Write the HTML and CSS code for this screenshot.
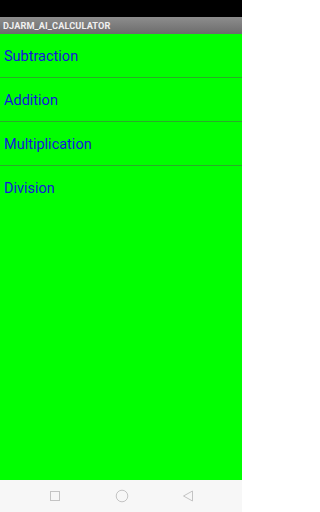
FILE: index.html
```html
<!DOCTYPE html>
<html>
<head>
<meta charset="utf-8">
<link rel="stylesheet" href="styles.css">
</head>
<body>
<div class="screen">
  <div class="status"></div>
  <div class="titlebar">DJARM_AI_CALCULATOR</div>
  <div class="content">
    <div class="row">Subtraction</div>
    <div class="row">Addition</div>
    <div class="row">Multiplication</div>
    <div class="row last">Division</div>
  </div>
  <div class="navbar">
    <svg class="nav-icon" width="12" height="12" viewBox="0 0 12 12"><rect x="1.5" y="1.5" width="9" height="9" fill="none" stroke="#c4c4c4" stroke-width="1"/></svg>
    <svg class="nav-icon" width="14" height="14" viewBox="0 0 14 14"><circle cx="7" cy="7" r="5.8" fill="none" stroke="#c4c4c4" stroke-width="1"/></svg>
    <svg class="nav-icon" width="12" height="12" viewBox="0 0 12 12"><path d="M10.5 1 L1.5 6 L10.5 11 Z" fill="none" stroke="#c4c4c4" stroke-width="1" stroke-linejoin="round"/></svg>
  </div>
</div>
</body>
</html>
```

FILE: styles.css
```css
html, body {
  margin: 0;
  padding: 0;
}
body {
  width: 242px;
  height: 512px;
  overflow: hidden;
  font-family: Roboto, "Liberation Sans", sans-serif;
}
.screen {
  display: flex;
  flex-direction: column;
  height: 512px;
}
.status {
  height: 17px;
  background: #000;
  flex: none;
}
.titlebar {
  height: 17px;
  flex: none;
  background: linear-gradient(#8d8d8d, #6c6c6c);
  color: #f0f0f0;
  font-weight: bold;
  font-size: 9.2px;
  line-height: 17px;
  padding-left: 3px;
  letter-spacing: 0.1px;
}
.content {
  flex: 1;
  background: #00ff00;
}
.row {
  box-sizing: border-box;
  height: 44px;
  padding-top: 2px;
  line-height: 41px;
  padding-left: 4px;
  color: #1414dc;
  font-size: 14.5px;
  border-bottom: 1px solid #2aaa2a;
}
.row.last {
  border-bottom: none;
}
.navbar {
  height: 32px;
  flex: none;
  background: #f7f7f7;
  display: flex;
  align-items: center;
  justify-content: space-between;
  padding: 0 48px 0 49px;
}
.nav-icon {
  display: block;
}
```
